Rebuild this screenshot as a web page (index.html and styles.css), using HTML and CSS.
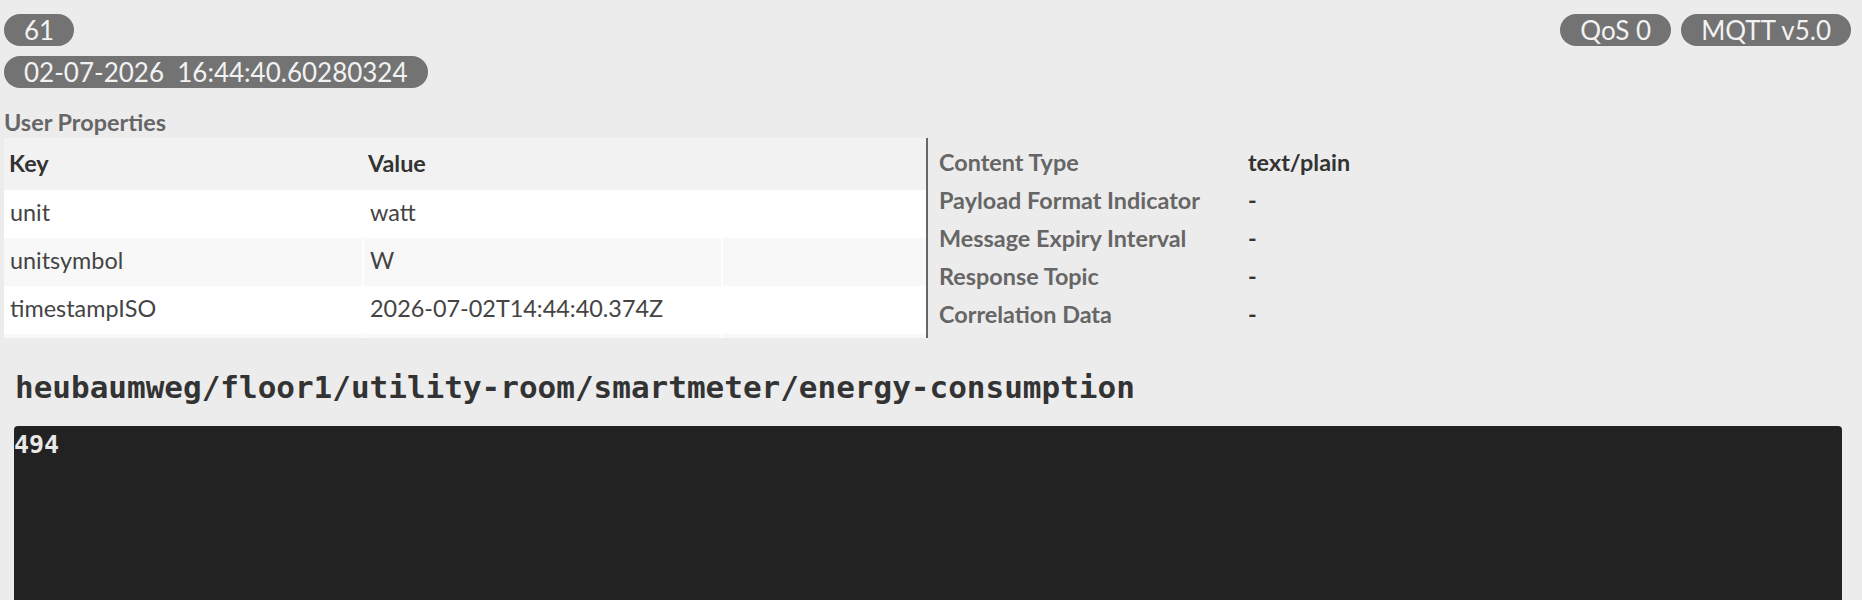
FILE: index.html
```html
<!DOCTYPE html>
<html lang="en">
  <head>
    <meta charset="UTF-8" />
    <meta name="viewport" content="width=device-width, initial-scale=1.0" />
    <title>Message Details</title>
    <link rel="stylesheet" href="styles.css">
  </head>
  <body>
    <div id="header">
      <div class="badgeColumn">
        <span class="badge">61</span>
        <span class="badge">02-07-2026&nbsp;&nbsp;16:44:40.60280324</span>
      </div>
      <div class="badgeRow">
        <span class="badge">QoS 0</span>
        <span class="badge">MQTT v5.0</span>
      </div>
    </div>

    <div id="properties">
      <p class="sectionTitle">User Properties</p>
      <div class="propsRow">
        <div id="userProps">
          <table>
            <thead>
              <tr>
                <th class="keyCol">Key</th>
                <th class="valueCol">Value</th>
                <th></th>
              </tr>
            </thead>
            <tbody>
              <tr>
                <td>unit</td>
                <td>watt</td>
                <td></td>
              </tr>
              <tr>
                <td>unitsymbol</td>
                <td>W</td>
                <td></td>
              </tr>
              <tr>
                <td>timestampISO</td>
                <td>2026-07-02T14:44:40.374Z</td>
                <td></td>
              </tr>
              <tr>
                <td></td>
                <td></td>
                <td></td>
              </tr>
            </tbody>
          </table>
        </div>

        <div id="messageProps">
          <span class="propLabel">Content Type</span>
          <span class="propValue">text/plain</span>
          <span class="propLabel">Payload Format Indicator</span>
          <span class="propValue">-</span>
          <span class="propLabel">Message Expiry Interval</span>
          <span class="propValue">-</span>
          <span class="propLabel">Response Topic</span>
          <span class="propValue">-</span>
          <span class="propLabel">Correlation Data</span>
          <span class="propValue">-</span>
        </div>
      </div>
    </div>

    <h2 id="topic">heubaumweg/floor1/utility-room/smartmeter/energy-consumption</h2>
    <pre id="payload">494</pre>
  </body>
</html>
```

FILE: styles.css
```css
/* Message detail view */
body {
  margin: 0;
  font-family: Lato, "Open Sans", sans-serif;
  background-color: #ececec;
  color: #333;
  overflow: hidden;
}

#header {
  display: flex;
  justify-content: space-between;
  align-items: flex-start;
  padding: 14px 11px 0 4px;
}

.badgeColumn {
  display: flex;
  flex-direction: column;
  align-items: flex-start;
  gap: 10px;
}

.badgeRow {
  display: flex;
  gap: 10px;
}

.badge {
  display: inline-block;
  height: 32px;
  line-height: 32px;
  padding: 0 20px;
  border-radius: 16px;
  background-color: #737373;
  color: #f2f2f2;
  font-size: 26px;
}

#properties {
  padding: 0 0 0 4px;
}

.sectionTitle {
  margin: 18px 0 0 0;
  height: 32px;
  line-height: 32px;
  font-size: 23.4px;
  font-weight: bold;
  color: #666;
}

.propsRow {
  display: flex;
  align-items: flex-start;
}

#userProps {
  width: 922px;
  height: 200px;
  overflow: hidden;
  background-color: #fff;
  border-right: 2px solid #666;
}

table {
  width: 100%;
  border-collapse: collapse;
  font-size: 23.4px;
}

thead tr {
  height: 52px;
}

tbody tr {
  height: 48px;
}

th {
  padding: 0 5px 3px;
  text-align: left;
  font-weight: bold;
  color: #333;
  background-color: #f2f2f2;
}

td {
  padding: 0 6px 5px;
  color: #444;
  border-left: 2px solid #fff;
}

td:first-child {
  border-left: none;
}

tbody tr:nth-child(even) td {
  background-color: #f8f8f8;
}

.keyCol {
  width: 349px;
}

.valueCol {
  width: 349px;
}

#messageProps {
  display: grid;
  grid-template-columns: 309px auto;
  grid-auto-rows: 38px;
  align-items: center;
  padding: 5px 0 0 11px;
  font-size: 23.4px;
  font-weight: bold;
}

.propLabel {
  color: #666;
}

.propValue {
  color: #333;
}

#topic {
  margin: 31px 0 21px 15px;
  font-family: "DejaVu Sans Mono", "Liberation Mono", monospace;
  font-size: 31px;
  font-weight: bold;
  color: #333;
}

#payload {
  margin: 0 20px 0 14px;
  padding: 4px 0 0 0;
  min-height: 300px;
  background-color: #222;
  border-radius: 4px;
  font-family: "DejaVu Sans Mono", "Liberation Mono", monospace;
  font-size: 25px;
  font-weight: bold;
  color: #e8e8e8;
}
```
